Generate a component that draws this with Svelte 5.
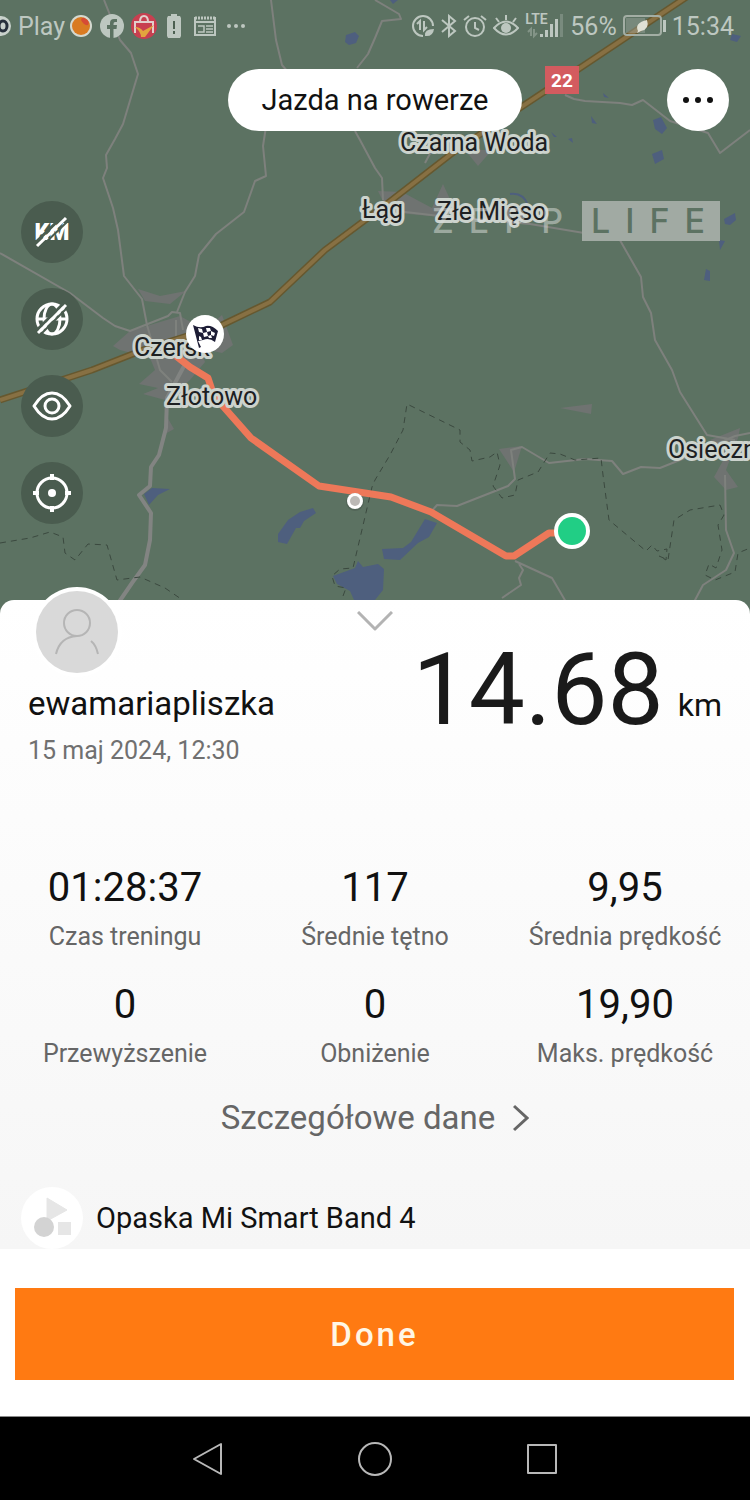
<script>
  const stats = [
    { value: '01:28:37', label: 'Czas treningu' },
    { value: '117', label: 'Średnie tętno' },
    { value: '9,95', label: 'Średnia prędkość' },
    { value: '0', label: 'Przewyższenie' },
    { value: '0', label: 'Obniżenie' },
    { value: '19,90', label: 'Maks. prędkość' }
  ];

  const places = [
    { name: 'Czarna Woda', x: 400, y: 151 },
    { name: 'Łąg', x: 362, y: 218 },
    { name: 'Złe Mięso', x: 437, y: 220 },
    { name: 'Czersk', x: 134, y: 356 },
    { name: 'Złotowo', x: 166, y: 405 },
    { name: 'Osieczna', x: 668, y: 458 }
  ];

  const roads = [
    'M104 0 120 40 131 53 138 74 123 124 115 139 106 155 107 168 103 178 113 208 118 230 124 276 142 299 147 325 160 370 172 382',
    'M271 0 276 40 282 65 288 72M267 120 263 146 266 176 255 181 244 212 216 234 199 255 195 276 185 292 177 312',
    'M0 253 70 293 103 318 115 326 130 331 168 316 172 312 180 313 183 330M176 320V355',
    'M375 0 399 14 401 19 382 21 375 38 368 54 357 68M355 131 360 140 375 168 382 178 383 200',
    'M388 210 440 216 530 224 590 234 617 235 641 277 643 297 651 313 655 340 672 370 680 392 707 435 735 440',
    'M565 95 574 99 585 101 620 103 632 105 643 100 670 121 708 133 720 153 750 130',
    'M431 512 437 505 457 506 508 486 515 479 511 450 522 447 549 463 585 459 612 461 623 474 641 467 660 468 680 460 735 436 750 433',
    'M515 561 552 578 566 602M519 564 523 570 519 578 521 585 502 598',
    'M725 475 726 530 734 553 726 570 703 585 694 602',
    'M425 163 433 148 440 145'
  ];

  const borders = [
    'M0 543 30 538 50 532 63 537 65 553 75 560 88 544 107 545 117 580 140 577 165 588 184 601',
    'M343 596 346 588 335 586 332 576 340 569 353 568 372 487 375 480 390 455 403 430 407 404 460 430 460 442 470 450 472 461 490 457 497 452 500 465 493 486 502 498 515 495 518 480 538 472 550 453 560 454 575 460 601 458 603 475 609 520 646 551 652 545 657 551 667 549 666 560 659 556 668 560 674 520 690 510 708 507 720 505 724 515 718 525 722 550 716 568 709 564 705 575 715 580 735 572 738 553 750 548'
  ];
</script>

<div class="screen">
  <section class="map" aria-label="Mapa trasy">
    <svg class="canvas" viewBox="0 0 750 620" preserveAspectRatio="xMidYMin slice">
      <rect width="750" height="620" fill="#5c7262" />
      <g fill="#6f7371">
        <path d="M138 289 160 296 186 291 170 304 145 301Z" />
        <path d="M113 346 130 331 180 316 205 330 222 315 233 345 222 353 200 348 205 362 190 380 165 400 143 394 158 388 139 384 155 370 150 358 120 350Z" />
        <path d="M465 150 492 150 478 166ZM378 191 402 192 432 208 443 184 455 210 440 217 388 212ZM499 449 522 446 514 472ZM560 408 592 404 591 414ZM166 415 174 429 165 434ZM710 440 740 428 738 438 726 470 738 487 726 490 714 477 726 455Z" />
      </g>
      <g fill="#4e5f7e">
        <path d="M346 35 355 32 359 36 356 43 349 45 345 42ZM390 0H398L393 4ZM732 34 741 36 737 42 730 40ZM653 120 661 117 667 128 662 134 655 129ZM652 154 662 150 664 159 655 164ZM603 93 609 98 604 97ZM591 116 597 124 592 123ZM568 139 572 138 573 143ZM551 132 557 137 554 137ZM724 219 735 213 736 220 730 225 725 224ZM719 240 725 241 720 250ZM706 269 710 271 710 281 704 280Z" />
        <path d="M144 494 152 488 170 489 158 495 149 505ZM278 534 288 520 300 512 313 508 316 513 304 521 300 528 296 528 287 544 278 542ZM382 549 403 548 411 542 425 519 437 523 429 537 418 543 400 560 384 559ZM333 576 355 568 358 561 363 567 378 564 384 569 383 590 375 600 354 600 350 591 337 584Z" />
      </g>
      <path d="M510 194Q523 192 528 205" fill="none" stroke="#4e5f7e" stroke-width="2" />
      {#each roads as d}
        <path {d} fill="none" stroke="#7e817d" stroke-width="2" stroke-linejoin="round" />
      {/each}
      <path d="M184 366 167 398 166 428 159 455 151 467 150 486 139 495 151 513 150 540 145 565 132 583 119 602" fill="none" stroke="#828482" stroke-width="4" stroke-linejoin="round" />
      {#each borders as d}
        <path {d} fill="none" stroke="#3b493f" stroke-width="1" stroke-dasharray="6 5" />
      {/each}
      <g fill="none" stroke-linejoin="round">
        <path d="M694 -8 580 68 455 151 388 203 325 250 270 302 222 325 143 350 92 370 0 400" stroke="#66582f" stroke-width="7" />
        <path d="M694 -8 580 68 455 151 388 203 325 250 270 302 222 325 143 350 92 370 0 400" stroke="#877043" stroke-width="4" />
        <path d="M176 356 190 367 208 378 214 396 251 438 319 486 391 497 431 512 506 556 514 556 549 533 570 533" stroke="#ee7859" stroke-width="7" />
      </g>
      <g class="place">
        {#each places as place}
          <text x={place.x} y={place.y}>{place.name}</text>
        {/each}
      </g>
      <rect x="545" y="66" width="34" height="28" fill="#d35b5f" />
      <text class="shield" x="562" y="87" text-anchor="middle">22</text>
      <circle cx="355" cy="502" r="9" fill="#48584d" opacity=".5" />
      <circle cx="355" cy="501" r="8" fill="#fff" />
      <circle cx="355" cy="501" r="5" fill="#bcb9b6" />
      <circle cx="205" cy="334" r="19" fill="#fff" />
      <path d="M193 325Q200 329 206 326 212 325 218 331L215 342Q209 337 203 340L198 341 201 347 199 348Z" fill="#1c1c35" />
      <path d="M198 328 202 329 203 333 199 332ZM206 328 210 328 211 331 207 332ZM203 333 207 332 208 336 204 337ZM211 331 215 333 214 336 211 335ZM199 336 201 337 202 340 199 340ZM208 336 211 335 212 338 209 338Z" fill="#fff" />
      <circle cx="572" cy="531" r="18" fill="#fff" />
      <circle cx="572" cy="531" r="14" fill="#21ce85" />
    </svg>

    <div class="status">
      <div class="left">
        <svg width="11" height="24" viewBox="0 0 11 24"><circle cx="1" cy="12" r="10" fill="#c9d2cc" /><ellipse cx="3" cy="12" rx="4" ry="5" fill="none" stroke="#27303c" stroke-width="3" /></svg>
        <span class="carrier">Play</span>
        <svg width="24" height="24" viewBox="0 0 24 24"><circle cx="12" cy="12" r="11" fill="#d5d9d0" /><circle cx="12" cy="12" r="9" fill="#d97b22" /><path d="M12 6Q13 2 17 5 21 7 19 11 15 12 12 6Z" fill="#d64b35" /></svg>
        <svg width="24" height="24" viewBox="0 0 24 24"><circle cx="12" cy="12" r="12" fill="#bdc7c0" /><path d="M10 24V15H7V11H10V9Q10 5 14 5H17V8H15Q13.500 8 13.500 10V11H17L16.500 15H13.500V24Z" fill="#5c7262" /></svg>
        <svg width="26" height="26" viewBox="0 0 26 26"><circle cx="13" cy="13" r="13" fill="#c83f50" /><path d="M4 20V9H8M18 9H22V20M8 9H18M9 9Q9 3 13 3T17 9" fill="none" stroke="#e2cfcc" stroke-width="2" /><path d="M4 14Q9 14 12 18L23 12 14 24H10Q10 19 4 14Z" fill="#e3a43e" /></svg>
        <svg class="cell" width="14" height="24" viewBox="0 0 14 24"><path d="M4 0H10V2H13L14 4V22L13 24H1L0 22V4L1 2H4Z" fill="#bdc7c0" /><path d="M7 7V15M7 17V20" stroke="#4c6051" stroke-width="2" /></svg>
        <svg class="news" width="22" height="20" viewBox="0 0 22 20"><path d="M1 1V19H21V1M1 6H21" fill="none" stroke="#bdc7c0" stroke-width="2" /><path d="M1 2H21" stroke="#bdc7c0" stroke-width="3" stroke-dasharray="2 1" /><path d="M4 10H10V16H4M12 10H19M12 13H19M12 16H19" fill="none" stroke="#bdc7c0" stroke-width="1.500" /></svg>
        <svg width="18" height="4" viewBox="0 0 18 4" fill="#bdc7c0"><circle cx="2" cy="2" r="2" /><circle cx="9" cy="2" r="2" /><circle cx="16" cy="2" r="2" /></svg>
      </div>
      <div class="right">
        <svg width="24" height="24" viewBox="0 0 24 24" fill="none" stroke="#bdc7c0" stroke-width="2"><path d="M12 22A10 10 0 1 1 22 12" /><path d="M6 10 9 7V16M13 7V16L16 13" /><path d="M14 22Q13 15 23 15 22 23 14 22Z" fill="#bdc7c0" stroke="none" /></svg>
        <svg width="16" height="24" viewBox="0 0 16 24" fill="none" stroke="#bdc7c0" stroke-width="2"><path d="M1 6 14 17 8 22V2L14 7 1 18" /></svg>
        <svg width="24" height="24" viewBox="0 0 24 24" fill="none" stroke="#bdc7c0" stroke-width="2"><circle cx="12" cy="13" r="9" /><path d="M12 8V14L16 16M1 6 6 2M23 6 18 2" /></svg>
        <svg width="26" height="24" viewBox="0 0 26 24" fill="none" stroke="#bdc7c0" stroke-width="2"><path d="M1 14Q13 1 25 14 13 27 1 14ZM13 6V1M6 8 3 4M20 8 23 4" /><circle cx="13" cy="14" r="5" fill="#bdc7c0" stroke="none" /></svg>
        <div class="network">
          <span class="lte">LTE</span>
          <svg width="39" height="26" viewBox="0 0 39 26" fill="#bdc7c0"><path d="M15 21H18V24H15ZM20 17H23V24H20ZM25 11H28V24H25ZM30 6H33V24H30Z" /><path d="M35 1H38V24H35Z" opacity=".3" /><path d="M3 19 6 16V23M9 16V23L12 20" fill="none" stroke="#bdc7c0" opacity=".4" stroke-width="2" /></svg>
        </div>
        <span>56%</span>
        <svg width="43" height="22" viewBox="0 0 43 22"><rect x="1" y="1" width="37" height="19" rx="3" fill="none" stroke="#a3aea4" stroke-width="2" /><path d="M3 3H22V18H3Z" fill="#a3ada5" opacity=".4" /><path d="M40 5H43V17H40Z" fill="#bdc7c0" /><path d="M15 16Q11 8 24 5 27 14 18 16L14 18Z" fill="#dfe0d5" /></svg>
        <span>15:34</span>
      </div>
    </div>

    <header class="top">
      <h1>Jazda na rowerze</h1>
      <button class="more" aria-label="Więcej">
        <svg width="32" height="8" viewBox="0 0 32 8" fill="#111"><circle cx="4" cy="4" r="3" /><circle cx="16" cy="4" r="3" /><circle cx="28" cy="4" r="3" /></svg>
      </button>
    </header>

    <div class="overlay">
      <div class="controls">
        <button aria-label="Ukryj kilometry">
          <svg width="40" height="40" viewBox="0 0 40 40"><text x="20" y="28" text-anchor="middle" class="km-icon">KM</text><path d="M3 31 32 3" stroke="#4a5c4f" stroke-width="3" /><path d="M5 34 34 6" stroke="#fff" stroke-width="3" /><path d="M7 37 36 9" stroke="#4a5c4f" stroke-width="2" /></svg>
        </button>
        <button aria-label="Ukryj mapę">
          <svg width="40" height="40" viewBox="0 0 40 40" fill="none" stroke="#fff" stroke-width="3"><circle cx="20" cy="20" r="15" /><ellipse cx="20" cy="20" rx="8" ry="15" /><path d="M5 20H35" /><path d="M4 32 32 4" stroke="#4a5c4f" stroke-width="3" /><path d="M6 34 34 6" /><path d="M8 36 36 8" stroke="#4a5c4f" stroke-width="2" /></svg>
        </button>
        <button aria-label="Prywatność">
          <svg width="40" height="40" viewBox="0 0 40 40" fill="none" stroke="#fff" stroke-width="3"><path d="M2 20Q10 7 20 7T38 20Q30 33 20 33T2 20Z" stroke-linejoin="round" /><circle cx="20" cy="20" r="7" /></svg>
        </button>
        <button aria-label="Wyśrodkuj">
          <svg width="40" height="40" viewBox="0 0 40 40" fill="none" stroke="#fff" stroke-width="3"><circle cx="20" cy="20" r="15" /><path d="M20 1V7M20 33V39M1 20H7M33 20H39" stroke-width="4" /><circle cx="20" cy="20" r="4" fill="#fff" stroke="none" /></svg>
        </button>
      </div>
      <div class="brand"><span class="zepp">ZEPP</span><span class="life">LIFE</span></div>
    </div>
  </section>

  <main class="sheet">
    <button class="collapse" aria-label="Zwiń">
      <svg width="36" height="20" viewBox="0 0 36 20" fill="none" stroke="#b3b3b3" stroke-width="3"><path d="M1 1 18 18 35 1" stroke-linejoin="round" /></svg>
    </button>
    <div class="profile">
      <div class="who">
        <svg class="avatar" width="90" height="90" viewBox="0 0 90 90"><circle cx="45" cy="45" r="45" fill="#fff" /><circle cx="45" cy="45" r="41" fill="#d9d9d9" /><g fill="none" stroke="#b5b5b5" stroke-width="2"><circle cx="45" cy="36" r="13" /><path d="M24 67Q28 50 45 49M59 54Q64 58 66 67" /></g></svg>
        <h2>ewamariapliszka</h2>
        <time datetime="2024-05-15T12:30">15 maj 2024, 12:30</time>
      </div>
      <p class="distance"><strong>14.68</strong><span>km</span></p>
    </div>
    <dl class="stats">
      {#each stats as stat}
        <div>
          <dt>{stat.label}</dt>
          <dd>{stat.value}</dd>
        </div>
      {/each}
    </dl>
    <a class="details" href="#details">
      Szczegółowe dane
      <svg width="16" height="28" viewBox="0 0 16 28" fill="none" stroke="#666" stroke-width="3"><path d="M1 2 14 14 1 26" /></svg>
    </a>
    <div class="device">
      <svg width="62" height="62" viewBox="0 0 62 62"><circle cx="31" cy="31" r="31" fill="#fff" /><path d="M26 11 46 23 26 34Z" fill="#e6e6e6" stroke="#e6e6e6" stroke-linejoin="round" /><rect x="37" y="35" width="13" height="13" fill="#e6e6e6" /><circle cx="23" cy="40" r="10" fill="#d3d3d3" /></svg>
      <span>Opaska Mi Smart Band 4</span>
    </div>
  </main>

  <footer>
    <button class="done">Done</button>
  </footer>

  <nav aria-label="System">
    <button aria-label="Wstecz"><svg width="36" height="36" viewBox="0 0 36 36"><path d="M4 18 31 3V33Z" /></svg></button>
    <button aria-label="Ekran główny"><svg width="36" height="36" viewBox="0 0 36 36"><circle cx="18" cy="18" r="16" /></svg></button>
    <button aria-label="Ostatnie"><svg width="36" height="36" viewBox="0 0 36 36"><rect x="4" y="4" width="28" height="28" /></svg></button>
  </nav>
</div>

<style>
  :global(body) { margin: 0; background: #fff; }
  .screen {
    display: flex;
    flex-direction: column;
    min-height: 100vh;
    overflow: hidden;
    font-family: Roboto, "Liberation Sans", sans-serif;
    color: #111;
  }
  svg { display: block; flex: none; }
  button { font: inherit; border: 0; padding: 0; background: none; display: grid; place-items: center; cursor: pointer; }
  h1, h2, p, dl, dd { margin: 0; font-weight: 400; }

  .map { position: relative; padding-bottom: 96px; background: #5c7262; }
  .canvas { position: absolute; inset: 0; width: 100%; height: 100%; }
  .place { font-size: 25px; fill: #1d2022; stroke: #ccd3cd; stroke-width: 6px; stroke-linejoin: round; paint-order: stroke; }
  .shield { font-size: 19px; font-weight: 700; fill: #fff; }
  .status, .top, .overlay { position: relative; display: flex; justify-content: space-between; }

  .status { height: 52px; align-items: center; padding-right: 16px; color: #bdc7c0; font-size: 25px; }
  .left, .right { display: flex; align-items: center; gap: 7px; }
  .right { gap: 6px; }
  .carrier { margin-right: -3px; }
  .cell { margin: 0 6px 0 3px; }
  .news { margin-right: 4px; }
  .network { display: grid; }
  .network > * { grid-area: 1 / 1; }
  .lte { font-size: 14px; line-height: 12px; font-weight: 600; }

  .top { display: grid; grid-template-columns: 1fr auto 1fr; align-items: center; padding: 17px 21px 0; }
  h1 { grid-column: 2; padding: 0 34px; border-radius: 31px; background: #fff; font-size: 29px; line-height: 62px; }
  .more { justify-self: end; width: 62px; height: 62px; border-radius: 50%; background: #fff; }

  .overlay { align-items: flex-start; padding: 70px 30px 0 21px; }
  .controls { display: grid; gap: 25px; }
  .controls button { width: 62px; height: 62px; border-radius: 50%; background: #4a5c4f; }
  .km-icon { font-size: 23px; font-weight: 900; fill: #fff; }
  .brand { display: flex; align-items: center; gap: 4px; font-family: Inter, sans-serif; font-size: 34px; line-height: 40px; font-weight: 500; letter-spacing: 15px; color: rgba(220, 224, 221, .5); }
  .life { padding-left: 9px; background: #a1aaa3; color: #5c7262; }

  .sheet { position: relative; margin-top: -20px; border-radius: 14px 14px 0 0; background: linear-gradient(#fff, #f6f6f6); }
  .collapse { width: 60px; height: 42px; margin: 0 auto; }
  .profile { display: flex; justify-content: space-between; align-items: flex-start; padding: 0 28px; }
  .avatar { margin: -55px 0 7px 4px; }
  h2 { font-size: 33px; line-height: 40px; }
  time { display: block; margin-top: 12px; color: #707070; font-size: 25px; line-height: 30px; }
  .distance { display: flex; align-items: flex-end; gap: 14px; }
  .distance strong { font-size: 100px; line-height: 96px; font-weight: 400; color: #1a1a1a; }
  .distance span { font-size: 32px; line-height: 66px; }

  .stats { display: grid; grid-template-columns: repeat(3, 1fr); row-gap: 27px; margin-top: 97px; text-align: center; }
  .stats div { display: flex; flex-direction: column-reverse; gap: 9px; }
  dt { font-size: 25px; line-height: 32px; color: #666; white-space: nowrap; }
  dd { font-size: 40px; line-height: 49px; }
  .stats { line-height: 1; }
  .details { display: flex; justify-content: center; align-items: center; gap: 18px; margin-top: 28px; color: #666; font-size: 33px; line-height: 40px; text-decoration: none; }
  .device { display: flex; align-items: center; gap: 13px; margin-top: 49px; padding-left: 21px; font-size: 29px; }

  footer { padding: 39px 16px 36px 15px; background: #fff; }
  .done { width: 100%; height: 92px; background: #ff7a12; color: #fff6e5; font-size: 33px; font-weight: 500; letter-spacing: 3px; }
  nav { display: flex; justify-content: center; align-items: center; gap: 131px; flex: 1; min-height: 83px; border-top: 1px solid #8a8a8a; box-sizing: border-box; background: #000; }
  nav svg { fill: none; stroke: #b8b8b8; stroke-width: 2; stroke-linejoin: round; }
</style>
